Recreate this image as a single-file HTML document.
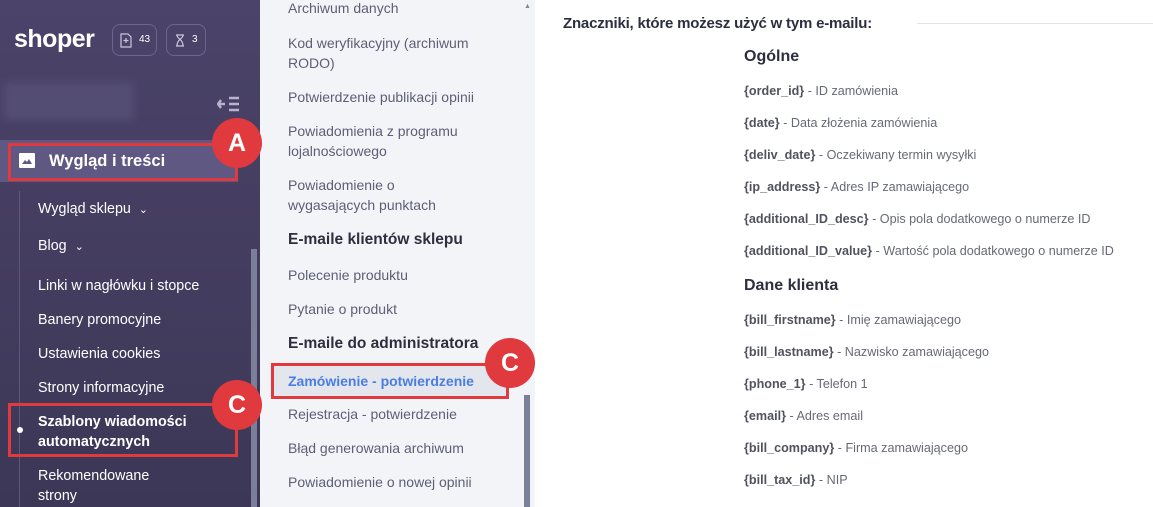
<!DOCTYPE html>
<html><head><meta charset="utf-8"><style>
*{margin:0;padding:0;box-sizing:border-box}
body{width:1153px;height:507px;overflow:hidden;position:relative;background:#fff;font-family:"Liberation Sans",sans-serif}
.a{position:absolute;white-space:nowrap}
#side{position:absolute;left:0;top:0;width:260px;height:507px;background:linear-gradient(#4b4369,#3c3756)}
.s{position:absolute;left:38px;color:#fff;font-size:14.3px;line-height:20px}
#mid{position:absolute;left:260px;top:0;width:275px;height:507px;background:#f3f4f8}
.m{position:absolute;left:288px;color:#5c5f75;font-size:14px;line-height:20px}
.h{position:absolute;left:288px;color:#2d2f3e;font-size:15.5px;font-weight:bold}
.r{position:absolute;left:744px;font-size:12.6px;color:#666a75}
.r b{color:#50535e}
.rh{position:absolute;left:744px;font-size:16px;font-weight:bold;color:#2d2f3e}
.box{position:absolute;border:3px solid #e0393e}
.badge{position:absolute;width:50px;height:50px;border-radius:50%;background:#e0393e;color:#fff;font-weight:bold;font-size:25px;text-align:center;line-height:50px}
</style></head><body>
<div id="side">
 <div class="a" style="left:14px;top:25px;color:#fff;font-size:25px;font-weight:bold;letter-spacing:-0.5px">shoper</div>
 <div class="a" style="left:112px;top:24px;width:45px;height:32px;border:1px solid #6b6590;border-radius:8px;color:#fff;font-size:10px;line-height:30px;padding-left:26px">43
  <svg style="position:absolute;left:7px;top:8px" width="12" height="15" viewBox="0 0 12 15"><path d="M1 1h7l3 3v10H1z" fill="none" stroke="#c9c6dc" stroke-width="1.2"/><path d="M6 5v5M3.5 7.5h5" stroke="#c9c6dc" stroke-width="1.2"/></svg></div>
 <div class="a" style="left:166px;top:24px;width:40px;height:32px;border:1px solid #6b6590;border-radius:8px;color:#fff;font-size:10px;line-height:30px;padding-left:25px">3
  <svg style="position:absolute;left:8px;top:9px" width="10" height="13" viewBox="0 0 10 13"><path d="M1 1h8M1 12h8M2 1c0 4 6 4 6 11M8 1c0 4-6 4-6 11" fill="none" stroke="#c9c6dc" stroke-width="1.2"/></svg></div>
 <div class="a" style="left:4px;top:82px;width:130px;height:38px;background:#544d73;filter:blur(4px)"></div>
 <svg class="a" style="left:217px;top:96px" width="24" height="16" viewBox="0 0 24 16"><path d="M8 8H1M4 4L1 8l3 4M12 2h10M12 8h10M12 14h10" fill="none" stroke="#b6b4cf" stroke-width="2.4"/></svg>
 <div class="a" style="left:0;top:140px;width:238px;height:42px;background:#5e5882"></div>
 <svg class="a" style="left:19px;top:153px" width="16" height="15" viewBox="0 0 16 15"><rect width="16" height="15" rx="1" fill="#fff"/><path d="M3 11l3-4 2 2 2-3 3 5z" fill="#5e5882"/></svg>
 <div class="a" style="left:49px;top:152px;color:#fff;font-weight:bold;font-size:16.5px">Wygląd i treści</div>
 <div class="a" style="left:19px;top:191px;width:1px;height:316px;background:#5d5780"></div>
 <div class="s" style="top:199px">Wygląd sklepu &nbsp;<span style="font-size:11px">&#8964;</span></div>
 <div class="s" style="top:236px">Blog &nbsp;<span style="font-size:11px">&#8964;</span></div>
 <div class="s" style="top:276px">Linki w nagłówku i stopce</div>
 <div class="s" style="top:310px">Banery promocyjne</div>
 <div class="s" style="top:344px">Ustawienia cookies</div>
 <div class="s" style="top:378px">Strony informacyjne</div>
 <div class="a" style="left:17px;top:427px;width:6px;height:6px;border-radius:50%;background:#fff"></div>
 <div class="s" style="top:412px;font-weight:bold">Szablony wiadomości<br>automatycznych</div>
 <div class="s" style="top:466px">Rekomendowane<br>strony</div>
 <div class="a" style="left:251px;top:249px;width:6px;height:258px;background:#7a7f9a"></div>
</div>
<div id="mid">
 <div class="a" style="left:264px;top:3px;font-size:7px;color:#888">&#9650;</div>
 <div class="a" style="left:264px;top:395px;width:6px;height:112px;background:#7a7f9a"></div>
</div>
<div class="m" style="top:-2px">Archiwum danych</div>
<div class="m" style="top:33px">Kod weryfikacyjny (archiwum<br>RODO)</div>
<div class="m" style="top:87px">Potwierdzenie publikacji opinii</div>
<div class="m" style="top:121px">Powiadomienia z programu<br>lojalnościowego</div>
<div class="m" style="top:175px">Powiadomienie o<br>wygasających punktach</div>
<div class="h" style="top:231px">E-maile klientów sklepu</div>
<div class="m" style="top:265px">Polecenie produktu</div>
<div class="m" style="top:299px">Pytanie o produkt</div>
<div class="h" style="top:335px">E-maile do administratora</div>
<div class="a" style="left:274px;top:366px;width:232px;height:30px;background:#e4e6ee"></div>
<div class="m" style="top:371px;color:#4a7ee0;font-weight:bold">Zamówienie - potwierdzenie</div>
<div class="m" style="top:404px">Rejestracja - potwierdzenie</div>
<div class="m" style="top:438px">Błąd generowania archiwum</div>
<div class="m" style="top:472px">Powiadomienie o nowej opinii</div>

<div class="a" style="left:563px;top:15px;font-size:15px;font-weight:bold;color:#2d2f3e;letter-spacing:-0.2px">Znaczniki, które możesz użyć w tym e-mailu:</div>
<div class="a" style="left:917px;top:23px;width:236px;height:1px;background:#e3e3e6"></div>
<div class="rh" style="top:48px">Ogólne</div>
<div class="r" style="top:84px"><b>{order_id}</b> - ID zamówienia</div>
<div class="r" style="top:116px"><b>{date}</b> - Data złożenia zamówienia</div>
<div class="r" style="top:148px"><b>{deliv_date}</b> - Oczekiwany termin wysyłki</div>
<div class="r" style="top:180px"><b>{ip_address}</b> - Adres IP zamawiającego</div>
<div class="r" style="top:212px"><b>{additional_ID_desc}</b> - Opis pola dodatkowego o numerze ID</div>
<div class="r" style="top:244px"><b>{additional_ID_value}</b> - Wartość pola dodatkowego o numerze ID</div>
<div class="rh" style="top:277px">Dane klienta</div>
<div class="r" style="top:313px"><b>{bill_firstname}</b> - Imię zamawiającego</div>
<div class="r" style="top:345px"><b>{bill_lastname}</b> - Nazwisko zamawiającego</div>
<div class="r" style="top:377px"><b>{phone_1}</b> - Telefon 1</div>
<div class="r" style="top:409px"><b>{email}</b> - Adres email</div>
<div class="r" style="top:441px"><b>{bill_company}</b> - Firma zamawiającego</div>
<div class="r" style="top:473px"><b>{bill_tax_id}</b> - NIP</div>

<div class="box" style="left:8px;top:143px;width:230px;height:38px"></div>
<div class="badge" style="left:212px;top:118px">A</div>
<div class="box" style="left:8px;top:403px;width:230px;height:54px"></div>
<div class="badge" style="left:212px;top:380px">C</div>
<div class="box" style="left:271px;top:363px;width:238px;height:36px"></div>
<div class="badge" style="left:485px;top:338px">C</div>
</body></html>
